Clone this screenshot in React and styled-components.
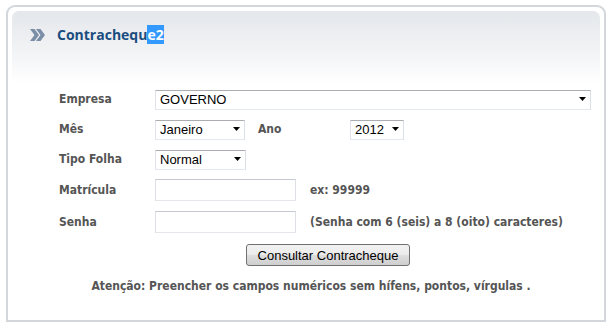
import styled, { createGlobalStyle } from "styled-components";

const GlobalStyle = createGlobalStyle`
    body {
        margin: 0;
        background: #ffffff;
        font-family: 'DejaVu Sans Condensed', 'DejaVu Sans', sans-serif;
    }
`;

const meses = ['Janeiro', 'Fevereiro', 'Março', 'Abril', 'Maio', 'Junho', 'Julho', 'Agosto', 'Setembro', 'Outubro', 'Novembro', 'Dezembro'];

function Chevrons() {
    return (
        <svg width="15" height="12" viewBox="0 0 15 12">
            <polygon points="0,0 4.5,0 9,6 4.5,12 0,12 4.5,6" fill="#7a8ea7" />
            <polygon points="6,0 10.5,0 15,6 10.5,12 6,12 10.5,6" fill="#7a8ea7" />
        </svg>
    );
}

function Combo({ width, value, options }) {
    return (
        <ComboBox $width={width}>
            <Select defaultValue={value}>
                {options.map((o) => <option key={o}>{o}</option>)}
            </Select>
            <Arrow width="7" height="4" viewBox="0 0 7 4">
                <polygon points="0,0 7,0 3.5,4" fill="#000" />
            </Arrow>
        </ComboBox>
    );
}

export default function App() {
    return (
        <>
            <GlobalStyle />
            <Panel>
                <Inner>
                    <TitleBar>
                        <Chevrons />
                        <Title>Contrachequ<Selected>e2</Selected></Title>
                    </TitleBar>

                    <Form onSubmit={(e) => e.preventDefault()}>
                        <Row>
                            <Label>Empresa</Label>
                            <Combo width={436} value="GOVERNO" options={['GOVERNO']} />
                        </Row>
                        <Row>
                            <Label>Mês</Label>
                            <Combo width={90} value="Janeiro" options={meses} />
                            <AnoLabel>Ano</AnoLabel>
                            <Combo width={54} value="2012" options={['2012', '2011', '2010']} />
                        </Row>
                        <Row>
                            <Label>Tipo Folha</Label>
                            <Combo width={91} value="Normal" options={['Normal', 'Complementar']} />
                        </Row>
                        <Row>
                            <Label>Matrícula</Label>
                            <Input type="text" />
                            <Hint>ex: 99999</Hint>
                        </Row>
                        <Row>
                            <Label>Senha</Label>
                            <Input type="password" />
                            <Hint>(Senha com 6 (seis) a 8 (oito) caracteres)</Hint>
                        </Row>
                        <ButtonRow>
                            <Button type="submit">Consultar Contracheque</Button>
                        </ButtonRow>
                    </Form>

                    <Notice>Atenção: Preencher os campos numéricos sem hífens, pontos, vírgulas .</Notice>
                </Inner>
            </Panel>
        </>
    );
}

const Panel = styled.div`
    box-sizing: border-box;
    width: 600px;
    height: 317px;
    margin: 5px 0 0 6px;
    padding: 4px;
    border: 2px solid #d3d6da;
    border-radius: 9px 9px 0 0;
    background: #ffffff;
`;

const Inner = styled.div`
    height: 100%;
    border-radius: 7px 7px 0 0;
    background: linear-gradient(to bottom, #e4e7eb 0px, #f2f3f5 40px, #ffffff 72px);
`;

const TitleBar = styled.div`
    display: flex;
    align-items: center;
    gap: 12px;
    height: 48px;
    padding-left: 18px;
`;

const Title = styled.h1`
    margin: 0;
    font-family: 'Open Sans', sans-serif;
    font-weight: 700;
    font-size: 14px;
    line-height: 14px;
    color: #1a4d7f;
`;

const Selected = styled.span`
    background: #3399ff;
    color: #ffffff;
`;

const Form = styled.form`
    display: flex;
    flex-direction: column;
    gap: 10px;
    padding: 30px 0 0 47px;
`;

const Row = styled.div`
    display: flex;
    align-items: center;
`;

const Label = styled.label`
    width: 96px;
    font-weight: 700;
    font-size: 12px;
    color: #555555;
`;

const AnoLabel = styled(Label)`
    width: 92px;
    margin-left: 13px;
`;

const ComboBox = styled.div`
    position: relative;
    width: ${(p) => p.$width}px;
    height: 20px;
`;

const Select = styled.select`
    appearance: none;
    box-sizing: border-box;
    width: 100%;
    height: 100%;
    padding: 0 0 0 4px;
    border: 1px solid;
    border-color: #abadb3 #dbdfe6 #e3e9ef #e2e3ea;
    border-radius: 0;
    background: #ffffff;
    font-family: 'Liberation Sans', Arial, sans-serif;
    font-size: 13px;
    color: #000000;
    outline: none;
`;

const Arrow = styled.svg`
    position: absolute;
    right: 5px;
    top: 8px;
    pointer-events: none;
`;

const Input = styled.input`
    box-sizing: border-box;
    width: 141px;
    height: 22px;
    border: 1px solid;
    border-color: #c5c9cf #dde1e6 #e3e7ec #dde1e6;
    background: #ffffff;
    outline: none;
`;

const Hint = styled.span`
    margin-left: 14px;
    font-weight: 700;
    font-size: 12px;
    color: #555555;
`;

const ButtonRow = styled.div`
    display: flex;
    padding-left: 187px;
    margin-top: 1px;
`;

const Button = styled.button`
    width: 164px;
    height: 22px;
    padding: 0;
    border: 1px solid #707070;
    border-radius: 3px;
    background: linear-gradient(to bottom, #f2f2f2 0%, #ebebeb 50%, #dddddd 51%, #cfcfcf 100%);
    font-family: 'Liberation Sans', Arial, sans-serif;
    font-size: 13px;
    color: #000000;
`;

const Notice = styled.p`
    margin: 13px 0 0;
    padding-left: 10px;
    text-align: center;
    font-weight: 700;
    font-size: 12px;
    color: #555555;
`;
